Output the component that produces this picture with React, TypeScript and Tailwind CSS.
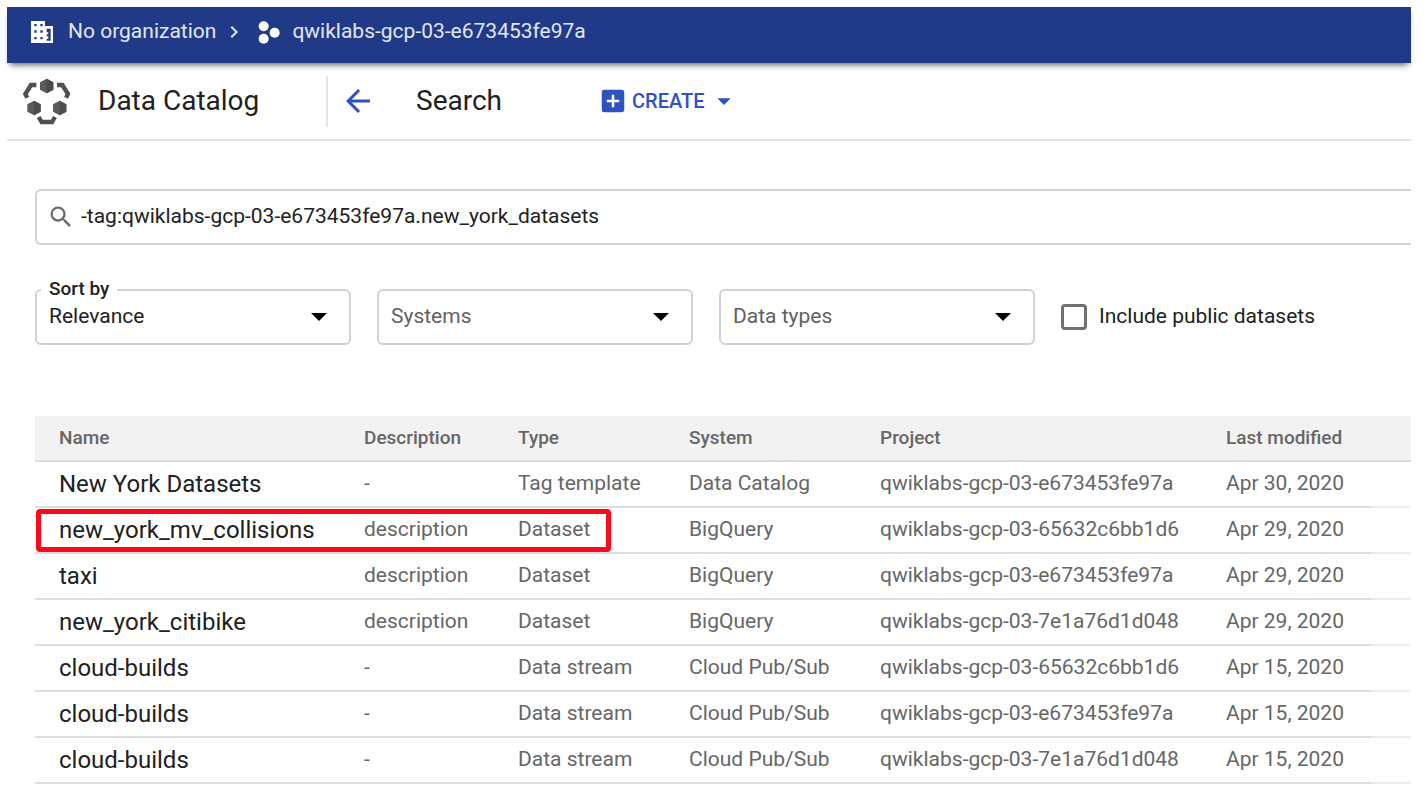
import React, { useState } from 'react';
import { MdAddBox, MdArrowBack, MdArrowDropDown, MdChevronRight, MdSearch } from 'react-icons/md';

interface Entry {
  id: number;
  name: string;
  description: string;
  type: string;
  system: string;
  project: string;
  modified: string;
  highlighted?: boolean;
}

const ENTRIES: Entry[] = [
  { id: 1, name: 'New York Datasets', description: '-', type: 'Tag template', system: 'Data Catalog', project: 'qwiklabs-gcp-03-e673453fe97a', modified: 'Apr 30, 2020' },
  { id: 2, name: 'new_york_mv_collisions', description: 'description', type: 'Dataset', system: 'BigQuery', project: 'qwiklabs-gcp-03-65632c6bb1d6', modified: 'Apr 29, 2020', highlighted: true },
  { id: 3, name: 'taxi', description: 'description', type: 'Dataset', system: 'BigQuery', project: 'qwiklabs-gcp-03-e673453fe97a', modified: 'Apr 29, 2020' },
  { id: 4, name: 'new_york_citibike', description: 'description', type: 'Dataset', system: 'BigQuery', project: 'qwiklabs-gcp-03-7e1a76d1d048', modified: 'Apr 29, 2020' },
  { id: 5, name: 'cloud-builds', description: '-', type: 'Data stream', system: 'Cloud Pub/Sub', project: 'qwiklabs-gcp-03-65632c6bb1d6', modified: 'Apr 15, 2020' },
  { id: 6, name: 'cloud-builds', description: '-', type: 'Data stream', system: 'Cloud Pub/Sub', project: 'qwiklabs-gcp-03-e673453fe97a', modified: 'Apr 15, 2020' },
  { id: 7, name: 'cloud-builds', description: '-', type: 'Data stream', system: 'Cloud Pub/Sub', project: 'qwiklabs-gcp-03-7e1a76d1d048', modified: 'Apr 15, 2020' },
];

const OrganizationIcon: React.FC = () => (
  <svg viewBox="0 0 66 66" className="w-[22px] h-[22px] shrink-0" aria-hidden="true">
    <path d="M2 0h40v15h24v51H0V0z" fill="currentColor" />
    <g fill="#203a87">
      <path d="M10 9h7v7h-7zM28 9h7v7h-7zM10 28h7v7h-7zM28 28h7v7h-7zM10 48h7v7h-7zM28 48h7v7h-7z" />
      <path d="M47 23h12v36H47v-6h5v-7h-5v-6h5v-6h-5z" />
    </g>
  </svg>
);

const ProjectIcon: React.FC = () => (
  <svg viewBox="0 0 66 69" className="w-[22px] h-[23px] shrink-0" fill="currentColor" aria-hidden="true">
    <circle cx="17" cy="16" r="15" />
    <circle cx="17" cy="53" r="15" />
    <circle cx="50" cy="35" r="15" />
  </svg>
);

const CatalogLogo: React.FC = () => (
  <svg viewBox="0 0 144 141" className="w-12 h-[47px] shrink-0" aria-hidden="true">
    <g fill="#5a5a5a">
      <path d="M74 2l20 11v22L74 46 54 35V13z" />
      <path d="M36 68l20 11v22l-20 11-20-11V79z" />
      <path d="M113 68l20 11v22l-20 11-20-11V79z" />
    </g>
    <g fill="#4c4c4c">
      <path d="M74 2l20 11v22L74 46z" />
      <path d="M36 68l20 11v22l-20 11z" />
      <path d="M113 68l20 11v22l-20 11z" />
    </g>
    <g fill="none" stroke="#505050" strokeWidth="13">
      <path d="M43 21H27L10 48l6 11" />
      <path d="M105 21h16l17 27-6 11" />
      <path d="M50 117l9 15h31l9-15" />
    </g>
  </svg>
);

const Caret: React.FC = () => (
  <svg viewBox="0 0 16 8" className="absolute right-6 top-6 w-4 h-2 pointer-events-none" aria-hidden="true">
    <path d="M0 0h16L8 8z" />
  </svg>
);

interface FilterProps {
  id: string;
  label: string;
  options: string[];
  floating?: boolean;
}

const Filter: React.FC<FilterProps> = ({ id, label, options, floating }) => (
  <div className="relative w-[316px]">
    {floating && (
      <label
        htmlFor={id}
        className="absolute -top-3 left-1.5 px-2 bg-white text-[19px] leading-6 font-medium"
      >
        {label}
      </label>
    )}
    <select
      id={id}
      aria-label={label}
      className={`w-full h-14 appearance-none rounded-md border-2 border-[#d2d2d2] bg-transparent pl-3 pr-12 text-[21px] ${
        floating ? 'text-[#212121]' : 'text-[#616161]'
      }`}
    >
      {options.map((option) => (
        <option key={option}>{option}</option>
      ))}
    </select>
    <Caret />
  </div>
);

const App: React.FC = () => {
  const [query, setQuery] = useState('-tag:qwiklabs-gcp-03-e673453fe97a.new_york_datasets');

  return (
    <div className="min-h-screen bg-white pl-[7px] pr-[13px] pt-[7px] font-['Roboto',sans-serif] text-[#212121]">
      {/* Project breadcrumb */}
      <nav className="relative flex h-14 items-center bg-[#203a87] px-6 pb-1.5 text-[21px] text-[#e3e7f3] shadow-[0_5px_6px_-3px_rgba(0,0,0,0.6)]">
        <span className="flex text-white"><OrganizationIcon /></span>
        <a href="#organization" className="ml-[15px]">No organization</a>
        <MdChevronRight className="ml-1.5 mr-3 size-6" />
        <span className="flex text-white"><ProjectIcon /></span>
        <a href="#project" className="ml-3">qwiklabs-gcp-03-e673453fe97a</a>
      </nav>

      {/* Page toolbar */}
      <header className="flex h-[78px] items-center border-b-2 border-[#e6e6e6] pl-[15px]">
        <CatalogLogo />
        <span className="ml-7 w-[228px] text-[28px]">Data Catalog</span>
        <div className="h-[51px] w-0.5 bg-[#e4e4e4]" />
        <button type="button" aria-label="Back" className="ml-3 text-[#3251c0]">
          <MdArrowBack className="size-9" />
        </button>
        <h1 className="ml-10 text-[28px]">Search</h1>
        <button type="button" className="ml-24 flex items-center text-xl font-medium text-[#3251c0]">
          <MdAddBox className="mr-1 size-[30px]" />
          CREATE
          <MdArrowDropDown className="ml-1 size-8" />
        </button>
      </header>

      <main className="pl-7 pt-12">
        <div className="flex h-14 items-center rounded-l-md border-2 border-r-0 border-[#d2d2d2] pl-2.5">
          <MdSearch className="size-7 text-[#6b6b6b]" />
          <input
            type="text"
            aria-label="Search the catalog"
            value={query}
            onChange={(e) => setQuery(e.target.value)}
            className="ml-1.5 flex-1 text-[21px] outline-none"
          />
        </div>

        <div className="mt-11 flex items-center gap-[26px]">
          <Filter id="sort" label="Sort by" options={['Relevance', 'Last modified']} floating />
          <Filter id="systems" label="Systems" options={['Systems', 'BigQuery', 'Cloud Pub/Sub']} />
          <Filter id="types" label="Data types" options={['Data types', 'Dataset', 'Data stream']} />
          <label className="flex items-center gap-3 text-[21px]">
            <input type="checkbox" className="size-[26px] appearance-none rounded-sm border-3 border-[#707070] checked:bg-[#3251c0]" />
            Include public datasets
          </label>
        </div>

        <table className="mt-[71px] w-full table-fixed text-left text-[21px] text-[#666]">
          <colgroup>
            <col className="w-[305px]" />
            <col className="w-[154px]" />
            <col className="w-[171px]" />
            <col className="w-[191px]" />
            <col className="w-[346px]" />
            <col />
            <col className="w-10" />
          </colgroup>
          <thead>
            <tr className="h-[45px] border-b-2 border-[#dcdcdc] bg-[#f2f2f2] text-[19px]">
              <th className="pl-6 font-medium">Name</th>
              <th className="pl-6 font-medium">Description</th>
              <th className="pl-6 font-medium">Type</th>
              <th className="pl-6 font-medium">System</th>
              <th className="pl-6 font-medium">Project</th>
              <th className="pl-6 font-medium">Last modified</th>
              <td />
            </tr>
          </thead>
          <tbody>
            {ENTRIES.map((entry) => (
              <tr key={entry.id} className="h-[46px] border-b-2 border-[#dedede] whitespace-nowrap">
                <td className="relative pl-6 text-2xl text-[#212121]">
                  {entry.name}
                  {entry.highlighted && (
                    <span className="absolute left-px top-px h-[43px] w-[575px] rounded-sm border-5 border-[#fb0a1e] pointer-events-none" />
                  )}
                </td>
                <td className="pl-6">{entry.description}</td>
                <td className="pl-6">{entry.type}</td>
                <td className="pl-6">{entry.system}</td>
                <td className="pl-6">{entry.project}</td>
                <td className="pl-6">{entry.modified}</td>
                <td className="border-b-2 border-[#ececec]" />
              </tr>
            ))}
          </tbody>
        </table>
      </main>
    </div>
  );
};

export default App;
